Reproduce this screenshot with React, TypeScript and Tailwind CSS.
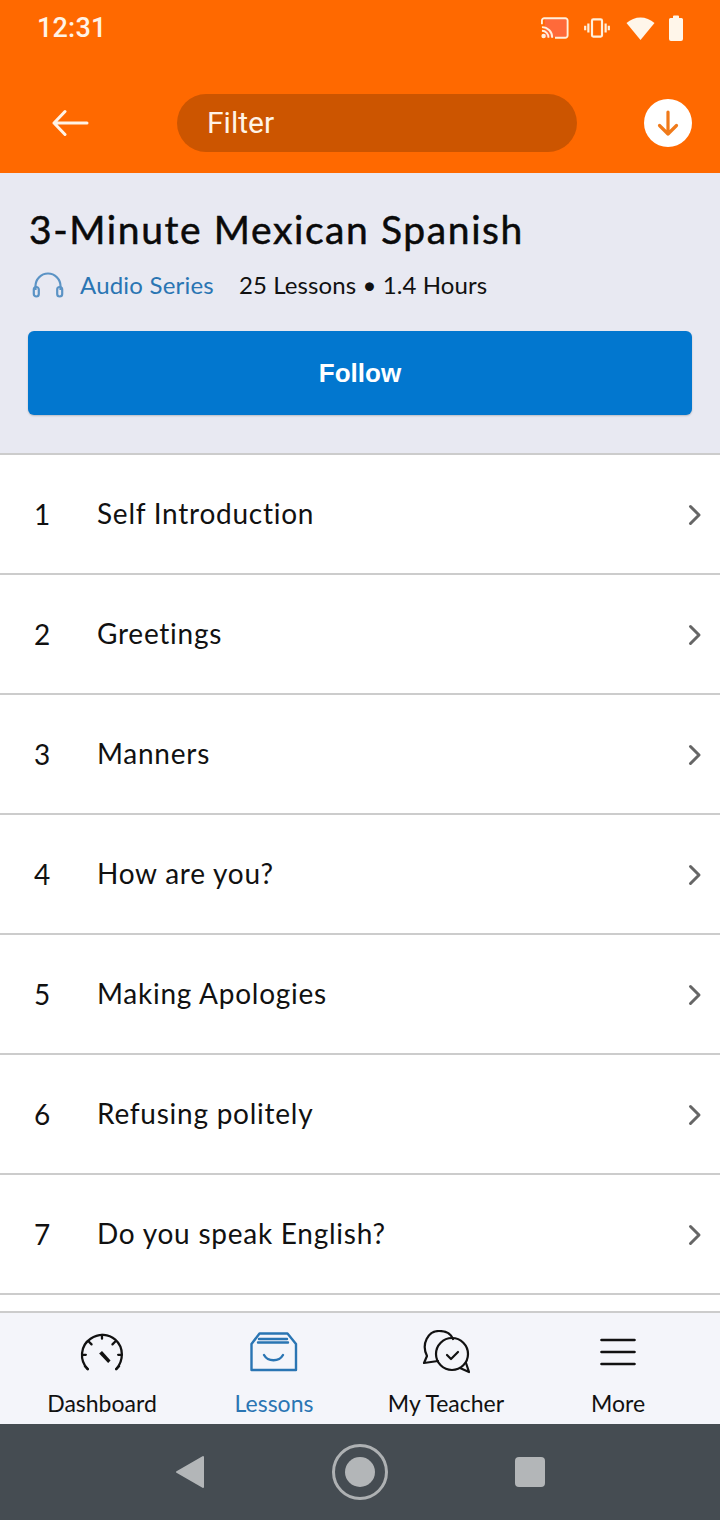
const lessons = [
  'Self Introduction',
  'Greetings',
  'Manners',
  'How are you?',
  'Making Apologies',
  'Refusing politely',
  'Do you speak English?',
];

const LessonRow = ({ num, title }: { num: number; title: string }) => (
  <div className="h-[120px] shrink-0 flex items-center bg-white border-b-2 border-[#cccccc] pl-[34px] pr-[18px]">
    <span className="w-[63px] -mt-[1px] text-[28px] text-[#111111]">{num}</span>
    <span className="flex-1 -mt-[2px] text-[28px] text-[#111111] tracking-[0.75px]">{title}</span>
    <svg width="14" height="22" viewBox="0 0 14 22" fill="none" stroke="#666666" strokeWidth="3" strokeLinecap="round" strokeLinejoin="round" className="mt-[1px]">
      <path d="M2.5 2.5 L11 11 L2.5 19.5" />
    </svg>
  </div>
);

const NavItem = ({ label, active, icon }: { label: string; active?: boolean; icon: React.ReactNode }) => (
  <div className="flex flex-col items-center">
    <div className="h-[54px] flex items-center justify-center">{icon}</div>
    <span className={`mt-[9px] text-[23px] leading-[30px] ${active ? 'text-[#2a75b3]' : 'text-[#111111]'}`}>{label}</span>
  </div>
);

export default function App() {
  return (
    <div className="w-[720px] h-[1520px] flex flex-col overflow-hidden bg-white font-['Lato',sans-serif]">
      {/* orange header */}
      <div className="h-[173px] shrink-0 bg-[#ff6900] flex flex-col">
        <div className="h-[54px] flex items-center justify-between pl-[37px] pr-[36px] pt-[2px]">
          <span className="text-[27px] font-['Roboto',sans-serif] font-medium text-[#fff3e6] tracking-[0.2px]">12:31</span>
          <div className="flex items-center">
            <svg width="28" height="24" viewBox="0 0 30 24" fill="none">
              <rect x="4" y="2" width="24" height="20" rx="2" fill="#ff6a3a" />
              <path d="M1 8 V4 a2.5 2.5 0 0 1 2.5-2.5 H26 a2.5 2.5 0 0 1 2.5 2.5 V20 a2.5 2.5 0 0 1-2.5 2.5 H15" stroke="#fff0dc" strokeWidth="2" />
              <path d="M1 11 a11 11 0 0 1 11 11.5 M1 15 a7 7 0 0 1 7 7.5" stroke="#fff0dc" strokeWidth="2" />
              <circle cx="2.8" cy="20.5" r="2.4" fill="#fff0dc" />
            </svg>
            <svg width="28" height="20" viewBox="0 0 28 22" fill="none" stroke="#fff0dc" strokeWidth="2.4" className="ml-[14px]">
              <rect x="8.5" y="1.5" width="11" height="19" rx="1.5" />
              <path d="M4.5 6 V16 M1 8.5 V13.5 M23.5 6 V16 M27 8.5 V13.5" />
            </svg>
            <svg width="31" height="26" viewBox="0 0 30 26" className="ml-[14px]">
              <path d="M15 25 L1 8 C 9 0.5 21 0.5 29 8 Z" fill="#fff6ea" />
            </svg>
            <svg width="16" height="26" viewBox="0 0 14 26" className="ml-[12px]">
              <path d="M4 3 V1.5 a1 1 0 0 1 1-1 H9 a1 1 0 0 1 1 1 V3 H12.5 a1.5 1.5 0 0 1 1.5 1.5 V24 a2 2 0 0 1-2 2 H2 a2 2 0 0 1-2-2 V4.5 A1.5 1.5 0 0 1 1.5 3 Z" fill="#fff6ea" />
            </svg>
          </div>
        </div>
        <div className="h-[58px] mt-[40px] flex items-center pl-[52px] pr-[28px]">
          <svg width="37" height="28" viewBox="0 0 37 28" fill="none" stroke="#fff3e6" strokeWidth="3" strokeLinecap="round" strokeLinejoin="round">
            <path d="M35 14 H2 M13 2.5 L2 14 L13 25.5" />
          </svg>
          <div className="ml-[88px] w-[400px] h-[58px] rounded-full bg-[#cc5500] flex items-center pl-[30px] pb-[2px] text-[30px] font-['Roboto',sans-serif] text-[#fff3e6]">
            Filter
          </div>
          <div className="ml-auto w-[48px] h-[48px] rounded-full bg-white flex items-center justify-center">
            <svg width="24" height="28" viewBox="0 0 24 28" fill="none" stroke="#f07a1a" strokeWidth="3.2" strokeLinecap="round" strokeLinejoin="round">
              <path d="M12 3 V25 M3.5 16.5 L12 25 L20.5 16.5" />
            </svg>
          </div>
        </div>
      </div>

      {/* series info */}
      <div className="h-[282px] shrink-0 bg-[#e8e9f2] border-b-2 border-[#cccccc] pl-[28px] pr-[28px] flex flex-col">
        <h1 className="mt-[29px] ml-[1px] text-[39px] leading-[54px] font-normal text-[#0a0a0a] tracking-[1.6px] [-webkit-text-stroke:0.5px_#0a0a0a]">3-Minute Mexican Spanish</h1>
        <div className="mt-[12px] h-[34px] flex items-center text-[24px]">
          <svg width="32" height="26" viewBox="0 0 32 26" fill="none" stroke="#5b93c5" strokeWidth="2.2" className="ml-[4px]">
            <path d="M3.5 18 V14 a12.5 12.5 0 0 1 25 0 V18" />
            <rect x="1.8" y="15" width="5" height="9.5" rx="2.5" />
            <rect x="25.2" y="15" width="5" height="9.5" rx="2.5" />
          </svg>
          <span className="ml-[16px] text-[#2a75b3] tracking-[0.2px]">Audio Series</span>
          <span className="ml-[25px] text-[#111111] tracking-[0.1px]">25 Lessons • 1.4 Hours</span>
        </div>
        <button className="mt-[29px] w-[664px] h-[84px] rounded-[6px] bg-[#0277cf] text-white text-[26px] font-bold font-['Liberation_Sans',sans-serif] shadow-[0_1px_2px_rgba(0,0,0,0.2)]">
          Follow
        </button>
      </div>

      {/* lesson list */}
      <div className="flex-1 min-h-0 overflow-hidden flex flex-col">
        {lessons.map((title, i) => (
          <LessonRow key={title} num={i + 1} title={title} />
        ))}
      </div>

      {/* bottom tabs */}
      <div className="h-[113px] shrink-0 bg-[#f4f5fa] border-t-2 border-[#cccccc] grid grid-cols-4 px-[16px] pt-[12px]">
        <NavItem
          label="Dashboard"
          icon={
            <svg width="44" height="38" viewBox="0 0 46 40" fill="none" stroke="#111111" strokeWidth="2.4" strokeLinecap="round">
              <path d="M8 38 C-1 29 0 13 11 6 C20 0 30 1 37 7 C46 15 46 29 38 38" />
              <path d="M23 2 V6 M9 9 L12 12 M2 23 H6 M37 9 L34 12 M44 23 H40 M5 35 L8 38 M41 35 L38 38" />
              <path d="M20 21.5 L23 19 L32 29 L29.5 31.5 Z" fill="#111111" stroke="none" />
            </svg>
          }
        />
        <NavItem
          label="Lessons"
          active
          icon={
            <svg width="48" height="40" viewBox="0 0 48 40" fill="none" stroke="#2a75b3" strokeWidth="2.4" strokeLinejoin="round" strokeLinecap="round">
              <path d="M1.5 12 L9.5 1.5 H37.5 L46 12 V38 H1.5 Z" />
              <path d="M9 7 H37 M8 10.5 H38" />
              <path d="M14 23 C18 30 29 30 33 23" />
            </svg>
          }
        />
        <NavItem
          label="My Teacher"
          icon={
            <svg width="48" height="44" viewBox="0 0 48 44" fill="none" stroke="#111111" strokeWidth="2.2" strokeLinejoin="round" strokeLinecap="round">
              <path d="M16 31 L2 33 L5 26 C-1 14 6 1 17 1 C24 1 29 4 31 9" />
              <circle cx="30" cy="24" r="16" />
              <path d="M38 38 L47 42 L44 33" />
              <path d="M25 25 L29 29 L36 22" />
            </svg>
          }
        />
        <NavItem
          label="More"
          icon={
            <svg width="36" height="28" viewBox="0 0 36 28" fill="none" stroke="#111111" strokeWidth="2.6" strokeLinecap="round">
              <path d="M1.5 2 H34.5 M1.5 14 H34.5 M1.5 26 H34.5" />
            </svg>
          }
        />
      </div>

      {/* android nav bar */}
      <div className="h-[96px] shrink-0 bg-[#454c52] flex items-center justify-center gap-[127px]">
        <svg width="30" height="34" viewBox="0 0 30 34">
          <path d="M28 2 V32 L2 17 Z" fill="#b3b6b8" stroke="#b3b6b8" strokeWidth="2" strokeLinejoin="round" />
        </svg>
        <div className="w-[56px] h-[56px] rounded-full border-[3px] border-[#aeb1b3] flex items-center justify-center">
          <div className="w-[30px] h-[30px] rounded-full bg-[#b3b6b8]" />
        </div>
        <div className="w-[30px] h-[30px] rounded-[4px] bg-[#b3b6b8]" />
      </div>
    </div>
  );
}
